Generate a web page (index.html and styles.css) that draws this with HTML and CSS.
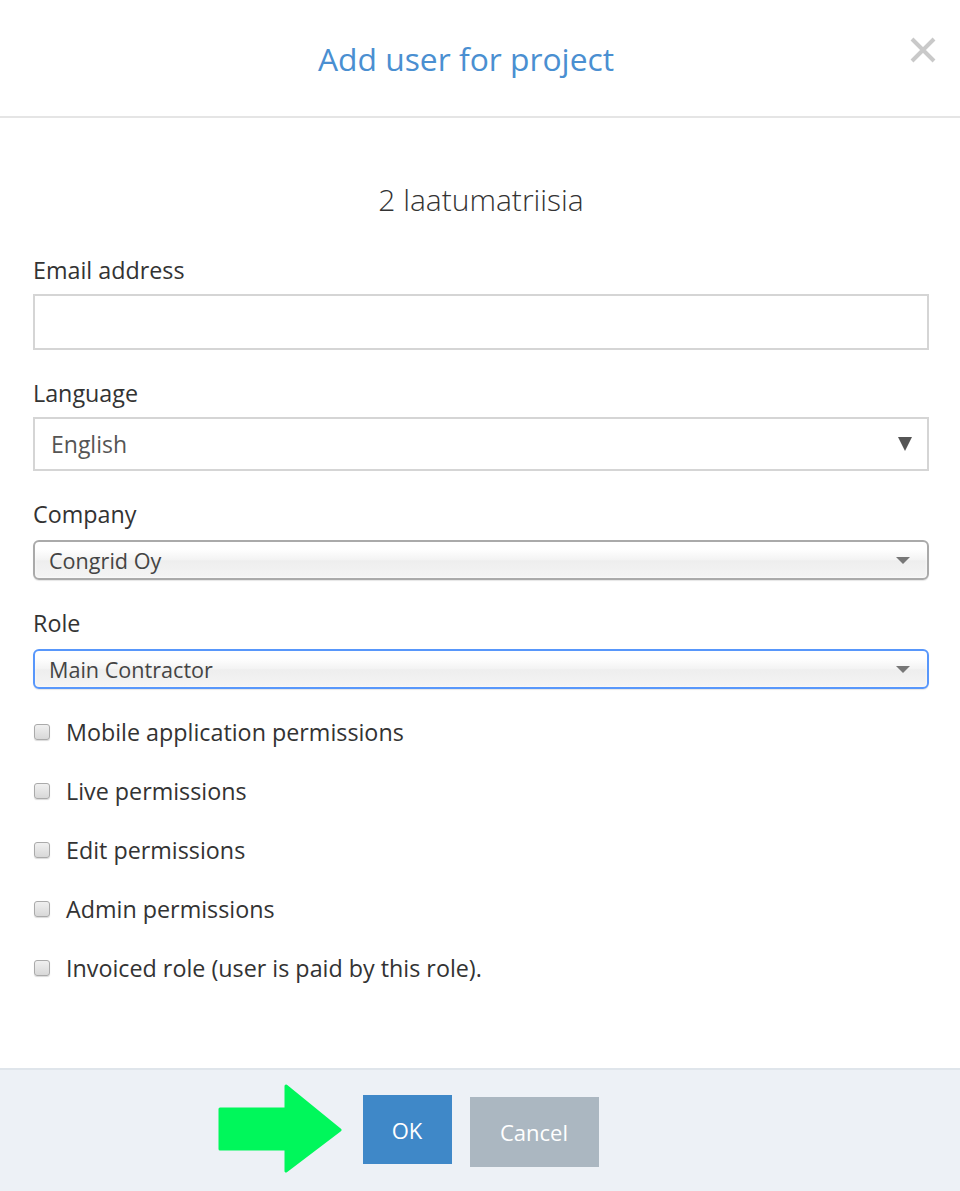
FILE: index.html
```html
<!DOCTYPE html>
<html lang="en">
<head>
    <meta charset="UTF-8">
    <title>Add user for project</title>
    <link rel="stylesheet" href="styles.css">
</head>
<body>

    <div class="modal">
        <div class="modal-header">
            <h1 class="modal-title">Add user for project</h1>
            <span class="close-btn">
                <svg width="26" height="26" viewBox="0 0 26 26">
                    <path d="M2 2 L24 24 M24 2 L2 24" stroke="#c9c9c9" stroke-width="4" fill="none"/>
                </svg>
            </span>
        </div>

        <div class="modal-body">
            <h2 class="project-name">2 laatumatriisia</h2>

            <div class="field">
                <label class="field-label">Email address</label>
                <div class="text-input"></div>
            </div>

            <div class="field">
                <label class="field-label">Language</label>
                <div class="plain-select">
                    <span>English</span>
                    <span class="plain-arrow"></span>
                </div>
            </div>

            <div class="field field-chosen">
                <label class="field-label">Company</label>
                <div class="chosen-select">
                    <span>Congrid Oy</span>
                    <span class="caret"></span>
                </div>
            </div>

            <div class="field field-chosen">
                <label class="field-label">Role</label>
                <div class="chosen-select focused">
                    <span>Main Contractor</span>
                    <span class="caret"></span>
                </div>
            </div>

            <div class="check-list">
                <div class="check-row"><span class="check-box"></span>Mobile application permissions</div>
                <div class="check-row"><span class="check-box"></span>Live permissions</div>
                <div class="check-row"><span class="check-box"></span>Edit permissions</div>
                <div class="check-row"><span class="check-box"></span>Admin permissions</div>
                <div class="check-row"><span class="check-box"></span>Invoiced role (user is paid by this role).</div>
            </div>
        </div>

        <div class="modal-footer">
            <div class="button-group">
                <svg class="hint-arrow" width="128" height="90" viewBox="0 0 128 90">
                    <path d="M4 26 L70 26 L70 3 L124 47 L70 88 L70 66 L4 66 Z" fill="#00f75b" stroke="#00f75b" stroke-width="3" stroke-linejoin="round"/>
                </svg>
                <button class="btn btn-ok">OK</button>
                <button class="btn btn-cancel">Cancel</button>
            </div>
        </div>
    </div>

</body>
</html>
```

FILE: styles.css
```css
body {
    margin: 0;
    background-color: #ffffff;
    font-family: 'Open Sans', 'Liberation Sans', sans-serif;
    color: #333333;
}

.modal {
    width: 960px;
    height: 1191px;
    display: flex;
    flex-direction: column;
}

.modal-header {
    position: relative;
    height: 116px;
    border-bottom: 2px solid #e5e5e5;
    display: flex;
    justify-content: center;
    align-items: center;
}

.modal-title {
    margin: 0;
    font-size: 31.8px;
    font-weight: normal;
    color: #4a8fd1;
    position: relative;
    left: -14px;
}

.close-btn {
    position: absolute;
    top: 37px;
    left: 910px;
    width: 26px;
    height: 26px;
}

.modal-body {
    flex: 1;
    padding: 62px 31px 0 33px;
}

.project-name {
    margin: 0 0 35px 0;
    text-align: center;
    font-size: 30px;
    line-height: 40px;
    font-weight: 300;
    color: #333333;
}

.field {
    margin-bottom: 28px;
}

.field-label {
    display: block;
    font-size: 23.3px;
    line-height: 30px;
    margin-bottom: 9px;
    color: #333333;
}

.field-chosen .field-label {
    margin-bottom: 11px;
}

.text-input {
    height: 52px;
    border: 2px solid #d5d5d5;
}

.plain-select {
    height: 50px;
    border: 2px solid #d5d5d5;
    display: flex;
    align-items: center;
    justify-content: space-between;
    padding: 0 15px 0 16px;
    font-size: 23px;
    color: #555555;
}

.plain-arrow {
    width: 0;
    height: 0;
    border-left: 7px solid transparent;
    border-right: 7px solid transparent;
    border-top: 14px solid #555555;
}

.chosen-select {
    height: 36px;
    border: 2px solid #aaaaaa;
    border-radius: 6px;
    background: linear-gradient(to bottom, #ffffff 20%, #f3f3f3 50%, #eeeeee 52%, #f4f4f4 100%);
    box-shadow: 0 0 3px #ffffff inset, 0 1px 1px rgba(0, 0, 0, 0.1);
    display: flex;
    align-items: center;
    justify-content: space-between;
    padding: 0 17px 0 14px;
    font-size: 21.6px;
    color: #444444;
}

.chosen-select.focused {
    border-color: #5897fb;
}

.caret {
    width: 0;
    height: 0;
    border-left: 7px solid transparent;
    border-right: 7px solid transparent;
    border-top: 7px solid #777777;
}

.check-list {
    display: flex;
    flex-direction: column;
    gap: 29px;
}

.check-row {
    display: flex;
    align-items: center;
    font-size: 23.3px;
    line-height: 30px;
    color: #333333;
}

.check-box {
    width: 14px;
    height: 14px;
    border: 1px solid #aaaaaa;
    border-radius: 3px;
    background: linear-gradient(to bottom, #f0f0f0, #d8d8d8);
    box-shadow: 0 1px 1px rgba(0, 0, 0, 0.15);
    margin: 0 16px 0 1px;
}

.modal-footer {
    height: 123px;
    border-top: 2px solid #dfe5eb;
    background-color: #edf1f6;
    display: flex;
    justify-content: center;
    padding-top: 25px;
    box-sizing: border-box;
}

.button-group {
    position: relative;
    display: flex;
    gap: 18px;
    align-items: flex-start;
    padding-left: 1px;
}

.hint-arrow {
    position: absolute;
    left: -146px;
    top: -12px;
}

.btn {
    border: none;
    color: #ffffff;
    font-family: 'Open Sans', 'Liberation Sans', sans-serif;
    font-size: 22px;
    cursor: pointer;
}

.btn-ok {
    width: 89px;
    height: 69px;
    background-color: #3f88c8;
}

.btn-cancel {
    width: 129px;
    height: 70px;
    margin-top: 2px;
    background-color: #abb7c1;
}
```
